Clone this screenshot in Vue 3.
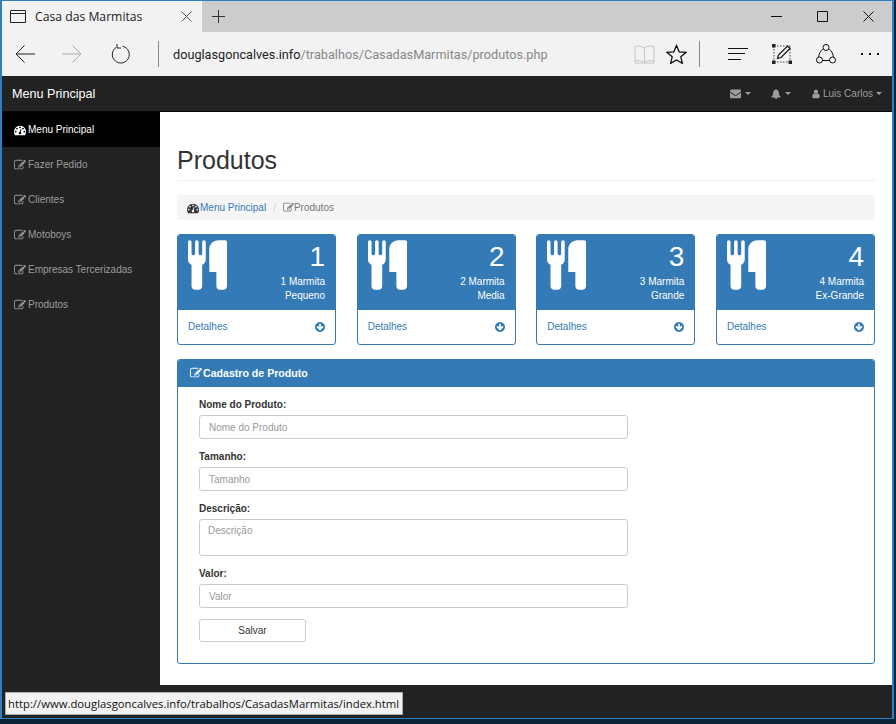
<script setup>
const sideItems = ['Fazer Pedido', 'Clientes', 'Motoboys', 'Empresas Tercerizadas', 'Produtos']
const cards = [
  { n: 1, line: '1 Marmita', size: 'Pequeno' },
  { n: 2, line: '2 Marmita', size: 'Media' },
  { n: 3, line: '3 Marmita', size: 'Grande' },
  { n: 4, line: '4 Marmita', size: 'Ex-Grande' }
]
const editPath = 'M888 1184l116-116-152-152-116 116v56h96v96h56zm440-720q-16-16-33 1l-350 350q-17 17-1 33t33-1l350-350q17-17 1-33zm80 594v190q0 119-84.5 203.5t-203.5 84.5h-832q-119 0-203.5-84.5t-84.5-203.5v-832q0-119 84.5-203.5t203.5-84.5h832q63 0 117 25 15 7 18 23 3 17-9 29l-49 49q-14 14-32 8-23-6-45-6h-832q-66 0-113 47t-47 113v832q0 66 47 113t113 47h832q66 0 113-47t47-113v-126q0-13 9-22l64-64q15-15 35-7t20 29zm-96-738l288 288-672 672h-288v-288zm444 132l-92 92-288-288 92-92q28-28 68-28t68 28l152 152q28 28 28 68t-28 68z'
const gaugePath = 'M384 1152q0-53-37.5-90.5t-90.5-37.5-90.5 37.5-37.5 90.5 37.5 90.5 90.5 37.5 90.5-37.5 37.5-90.5zm192-448q0-53-37.5-90.5t-90.5-37.5-90.5 37.5-37.5 90.5 37.5 90.5 90.5 37.5 90.5-37.5 37.5-90.5zm428 481l101-382q6-26-7.5-48.5t-38.5-29.5-48 6.5-30 39.5l-101 382q-60 5-107 43.5t-63 98.5q-20 77 20 146t117 89 146-20 89-117q16-60-6-117t-72-91zm660-33q0-53-37.5-90.5t-90.5-37.5-90.5 37.5-37.5 90.5 37.5 90.5 90.5 37.5 90.5-37.5 37.5-90.5zm-640-640q0-53-37.5-90.5t-90.5-37.5-90.5 37.5-37.5 90.5 37.5 90.5 90.5 37.5 90.5-37.5 37.5-90.5zm448 192q0-53-37.5-90.5t-90.5-37.5-90.5 37.5-37.5 90.5 37.5 90.5 90.5 37.5 90.5-37.5 37.5-90.5zm320 448q0 261-141 483-19 29-54 29h-1402q-35 0-54-29-141-221-141-483 0-182 71-348t191-286 286-191 348-71 348 71 286 191 191 286 71 348z'
const envelopePath = 'M1792 710v794q0 66-47 113t-113 47h-1472q-66 0-113-47t-47-113v-794q44 49 101 87 362 246 497 345 57 42 92.5 65.5t94.5 48 110 24.5h2q51 0 110-24.5t94.5-48 92.5-65.5q170-123 498-345 57-39 100-87zm0-294q0 79-49 151t-122 123q-376 261-468 325-10 7-42.5 30.5t-54 38-52 32.5-57.5 27-50 9h-2q-23 0-50-9t-57.5-27-52-32.5-54-38-42.5-30.5q-91-64-262-182.5t-205-142.5q-62-42-117-115.5t-55-136.5q0-78 41.5-130t118.5-52h1472q65 0 112.5 47t47.5 113z'
const bellPath = 'M912 1696q0-16-16-16-59 0-101.5-42.5t-42.5-101.5q0-16-16-16t-16 16q0 73 51.5 124.5t124.5 51.5q16 0 16-16zm816-288q0 52-38 90t-90 38h-448q0 106-75 181t-181 75-181-75-75-181h-448q-52 0-90-38t-38-90q50-42 91-88t85-119.5 74.5-158.5 50-206 19.5-260q0-152 117-282.5t307-158.5q-8-19-8-39 0-40 28-68t68-28 68 28 28 68q0 20-8 39 190 28 307 158.5t117 282.5q0 139 19.5 260t50 206 74.5 158.5 85 119.5 91 88z'
const userPath = 'M1536 1399q0 109-62.5 187t-150.5 78h-854q-88 0-150.5-78t-62.5-187q0-85 8.5-160.5t31.5-152 58.5-131 94-89 134.5-34.5q131 128 313 128t313-128q76 0 134.5 34.5t94 89 58.5 131 31.5 152 8.5 160.5zm-256-887q0 159-112.5 271.5t-271.5 112.5-271.5-112.5-112.5-271.5 112.5-271.5 271.5-112.5 271.5 112.5 112.5 271.5z'
const cutleryPath = 'M640 64v640q0 61-35.5 111t-92.5 70v779q0 52-38 90t-90 38h-128q-52 0-90-38t-38-90v-779q-57-20-92.5-70t-35.5-111v-640q0-26 19-45t45-19 45 19 19 45v416q0 26 19 45t45 19 45-19 19-45v-416q0-26 19-45t45-19 45 19 19 45v416q0 26 19 45t45 19 45-19 19-45v-416q0-26 19-45t45-19 45 19 19 45zm768 0v1600q0 52-38 90t-90 38h-128q-52 0-90-38t-38-90v-512h-224q-13 0-22.5-9.5t-9.5-22.5v-800q0-132 94-226t226-94h256q26 0 45 19t19 45z'
const arrowDownPath = 'M1412 897q0-27-18-45l-91-91q-18-18-45-18t-45 18l-189 189v-502q0-26-19-45t-45-19h-128q-26 0-45 19t-19 45v502l-189-189q-19-19-45-19t-45 19l-91 91q-18 18-18 45t18 45l362 362 91 91q18 18 45 18t45-18l91-91 362-362q18-18 18-45zm252-1q0 209-103 385.5t-279.5 279.5-385.5 103-385.5-103-279.5-279.5-103-385.5 103-385.5 279.5-279.5 385.5-103 385.5 103 279.5 279.5 103 385.5z'
</script>

<template>
  <div class="screen">
    <div class="window">
      <div class="tabstrip">
        <div class="tab">
          <svg class="tab-icon" width="17" height="14" viewBox="0 0 17 14" fill="none" stroke="#222"><path d="M.5.5h15v12H.5zM.5 3.5h15" /></svg>
          <span class="tab-title">Casa das Marmitas</span>
          <svg width="11" height="11" viewBox="0 0 11 11" stroke="#555" fill="none"><path d="M.5.5l10 10M10.5.5l-10 10" /></svg>
        </div>
        <svg class="tab-new" width="13" height="13" viewBox="0 0 13 13" stroke="#333" fill="none"><path d="M6.5 0v13M0 6.5h13" /></svg>
        <div class="win-controls">
          <svg width="11" height="11" viewBox="0 0 11 11" stroke="#111" fill="none"><path d="M0 5.5h11" /></svg>
          <svg width="11" height="11" viewBox="0 0 11 11" stroke="#111" fill="none"><path d="M.5.5h10v10H.5z" /></svg>
          <svg width="11" height="11" viewBox="0 0 11 11" stroke="#111" fill="none"><path d="M.5.5l10 10M10.5.5l-10 10" /></svg>
        </div>
      </div>

      <div class="toolbar">
        <svg class="t-back" width="20" height="18" viewBox="0 0 20 18" stroke="#222" fill="none"><path d="M20 9H1M9.5.5L1 9l8.5 8.5" /></svg>
        <svg class="t-forward" width="20" height="18" viewBox="0 0 20 18" stroke="#aaa" fill="none"><path d="M0 9h19M10.5.5L19 9l-8.5 8.5" /></svg>
        <svg class="t-refresh" width="19" height="20" viewBox="0 0 19 20" stroke="#222" fill="none"><path d="M5 3.5a8.5 8.5 0 1 0 6.5-1.3M6 0v4h4" /></svg>
        <span class="t-sep"></span>
        <span class="url">douglasgoncalves.info<span class="url-path">/trabalhos/CasadasMarmitas/produtos.php</span></span>
        <svg width="21" height="19" viewBox="0 0 21 19" stroke="#c4c4c4" fill="none"><path d="M10.5 3C8 1 4 .8 1 1.5V16c3-.7 7-.5 9.5 1.5C13 15.5 17 15.3 20 16V1.5C17 .8 13 1 10.5 3zM10.5 3v14.5M1 16v2h19v-2" /></svg>
        <svg class="t-star" width="21" height="20" viewBox="0 0 21 20" stroke="#111" stroke-width="1.3" fill="none"><path d="M10.5 1.5l2.7 6.300 6.800.6-5.200 4.400 1.600 6.600-5.900-3.500-5.900 3.500 1.600-6.600L1 8.400l6.800-.6z" /></svg>
        <span class="t-sep t-sep2"></span>
        <svg class="t-hub" width="20" height="12" viewBox="0 0 20 12" stroke="#111" fill="none"><path d="M0 .5h20M0 5.5h17M0 11.500h13" /></svg>
        <svg class="t-note" width="20" height="20" viewBox="0 0 20 20" fill="none"><path d="M2 2h16M2 18h16M2 2v16M18 2v16" stroke="#444" stroke-dasharray="1.5 1.5" /><path d="M5.500 14.500l1-3.500L15.500 2l2.500 2.500-9 9z" stroke="#111" stroke-width="1.2" fill="#f2f2f2" /><path d="M0 0h3.500v3.500H0zM16.500 16.500H20V20h-3.500zM0 16.500h3.500V20H0z" fill="#222" /></svg>
        <svg class="t-share" width="20" height="20" viewBox="0 0 20 20" stroke="#111" fill="none"><path d="M7 4.800C4.500 7 2.800 10 2.600 13M13 4.800c2.500 2.200 4.200 5.200 4.400 8.200M6.500 16.500h7" /><circle cx="10" cy="3.5" r="3" /><circle cx="3.5" cy="16" r="3" /><circle cx="16.5" cy="16" r="3" /></svg>
        <span class="t-more"><i></i><i></i><i></i></span>
      </div>

      <div class="navbar">
        <span class="brand">Menu Principal</span>
        <div class="nav-right">
          <span class="nav-item">
            <svg width="11" height="11" viewBox="0 0 1792 1792" fill="#9d9d9d"><path :d="envelopePath" /></svg>
            <i class="caret"></i>
          </span>
          <span class="nav-item">
            <svg width="10" height="10" viewBox="0 0 1792 1792" fill="#9d9d9d"><path :d="bellPath" /></svg>
            <i class="caret"></i>
          </span>
          <span class="nav-item nav-user">
            <svg width="9" height="10" viewBox="200 100 1400 1600" fill="#9d9d9d"><path :d="userPath" /></svg>
            Luis Carlos
            <i class="caret"></i>
          </span>
        </div>
      </div>

      <div class="middle">
        <nav class="sidebar">
          <a class="side-link active">
            <svg width="12" height="12" viewBox="0 0 1792 1792" fill="#fff"><path :d="gaugePath" /></svg>
            Menu Principal
          </a>
          <a v-for="item in sideItems" :key="item" class="side-link">
            <svg width="12" height="12" viewBox="0 0 1792 1792" fill="#9d9d9d"><path :d="editPath" /></svg>
            {{ item }}
          </a>
        </nav>

        <main class="content">
          <h1 class="page-title">Produtos</h1>
          <div class="breadcrumb">
            <svg width="12" height="12" viewBox="0 0 1792 1792" fill="#333"><path :d="gaugePath" /></svg>
            <a class="crumb-link">Menu Principal</a>
            <span class="crumb-sep">/</span>
            <svg width="11" height="11" viewBox="0 0 1792 1792" fill="#777"><path :d="editPath" /></svg>
            <span class="crumb-current">Produtos</span>
          </div>

          <div class="cards">
            <div v-for="c in cards" :key="c.n" class="card">
              <div class="card-head">
                <svg width="39" height="50" viewBox="0 0 1408 1792" fill="#fff"><path :d="cutleryPath" /></svg>
                <div class="card-text">
                  <div class="card-num">{{ c.n }}</div>
                  <div>{{ c.line }}</div>
                  <div>{{ c.size }}</div>
                </div>
              </div>
              <div class="card-foot">
                <span>Detalhes</span>
                <svg width="10" height="10" viewBox="128 128 1536 1536" fill="#337ab7"><path :d="arrowDownPath" /></svg>
              </div>
            </div>
          </div>

          <section class="panel">
            <div class="panel-head">
              <svg width="12" height="12" viewBox="0 0 1792 1792" fill="#fff"><path :d="editPath" /></svg>
              Cadastro de Produto
            </div>
            <form class="panel-body" @submit.prevent>
              <label class="field">
                <span>Nome do Produto:</span>
                <input placeholder="Nome do Produto" />
              </label>
              <label class="field">
                <span>Tamanho:</span>
                <input placeholder="Tamanho" />
              </label>
              <label class="field">
                <span>Descrição:</span>
                <textarea placeholder="Descrição"></textarea>
              </label>
              <label class="field">
                <span>Valor:</span>
                <input placeholder="Valor" />
              </label>
              <button class="save" type="button">Salvar</button>
            </form>
          </section>
        </main>
      </div>

      <div class="statusbar">
        <div class="status-tip">http://www.douglasgoncalves.info/trabalhos/CasadasMarmitas/index.html</div>
      </div>
    </div>
  </div>
</template>

<style>
html, body { margin: 0; background: #0d2338; overflow: hidden; }
</style>

<style scoped>
.screen {
  width: 896px;
  height: 724px;
  overflow: hidden;
  font-family: "Liberation Sans", Arial, sans-serif;
  font-size: 10px;
  color: #333;
}
.window {
  width: 890px;
  height: 717px;
  border: 2px solid #2f7fc0;
  border-width: 1px 2px 1px 2px;
  display: flex;
  flex-direction: column;
  background: #222;
}
.tabstrip {
  height: 31px;
  background: #cccccc;
  display: flex;
  align-items: center;
  flex-shrink: 0;
}
.tab {
  width: 200px;
  height: 31px;
  background: #f2f2f2;
  display: flex;
  align-items: center;
  flex-shrink: 0;
}
.tab-icon { margin-left: 8px; }
.tab-title {
  margin-left: 8px;
  font-family: "Open Sans", sans-serif;
  font-size: 12.2px;
  color: #222;
  width: 146px;
}
.tab-new { margin-left: 10px; }
.win-controls {
  margin-left: auto;
  display: flex;
  gap: 35px;
  padding-right: 18px;
}
.toolbar {
  height: 44px;
  background: #f2f2f2;
  display: flex;
  align-items: center;
  flex-shrink: 0;
}
.t-back { margin-left: 13px; }
.t-forward { margin-left: 27px; }
.t-refresh { margin-left: 29px; }
.t-sep {
  width: 1px;
  height: 26px;
  background: #888;
  margin-left: 28px;
}
.url {
  margin-left: 14px;
  width: 461px;
  font-family: Roboto, sans-serif;
  font-size: 12.7px;
  color: #222;
  white-space: nowrap;
}
.url-path { color: #888; }
.t-star { margin-left: 11px; }
.t-sep2 { margin-left: 12px; }
.t-hub { margin-left: 28px; }
.t-note { margin-left: 24px; }
.t-share { margin-left: 24px; }
.t-more {
  margin-left: 25px;
  display: flex;
  gap: 6px;
}
.t-more i {
  width: 2px;
  height: 2px;
  background: #111;
}
.navbar {
  height: 36px;
  background: #222;
  border-bottom: 1px solid #080808;
  box-sizing: border-box;
  display: flex;
  align-items: center;
  justify-content: space-between;
  flex-shrink: 0;
  padding: 0 10px;
}
.brand {
  font-size: 12.6px;
  color: #fff;
}
.nav-right {
  display: flex;
  align-items: center;
  color: #9d9d9d;
}
.nav-item {
  display: flex;
  align-items: center;
  gap: 4px;
  margin-left: 20px;
}
.nav-user {
  gap: 3px;
  margin-left: 21px;
}
.nav-user svg { width: 8px; }
.caret {
  width: 0;
  height: 0;
  border-left: 3px solid transparent;
  border-right: 3px solid transparent;
  border-top: 3px solid #9d9d9d;
}
.middle {
  flex: 1;
  display: flex;
  min-height: 0;
}
.sidebar {
  width: 158px;
  background: #222;
  flex-shrink: 0;
}
.side-link {
  height: 35px;
  display: flex;
  align-items: center;
  gap: 2px;
  padding-left: 12px;
  color: #9d9d9d;
}
.side-link.active {
  background: #000;
  color: #fff;
}
.content {
  flex: 1;
  background: #fff;
  padding: 0 17px;
}
.page-title {
  margin: 0 0 14px;
  padding: 35px 0 6px;
  height: 69px;
  box-sizing: border-box;
  border-bottom: 1px solid #eee;
  font-size: 25px;
  line-height: 27px;
  font-weight: 500;
}
.breadcrumb {
  height: 25px;
  background: #f5f5f5;
  border-radius: 3px;
  display: flex;
  align-items: center;
  padding: 0 10px;
  gap: 1px;
}
.crumb-link { color: #337ab7; }
.crumb-sep {
  color: #ccc;
  margin: 0 6px;
}
.crumb-current {
  color: #777;
  margin-left: -1px;
}
.cards {
  margin-top: 14px;
  display: flex;
  justify-content: space-between;
}
.card {
  width: 159px;
  height: 111px;
  box-sizing: border-box;
  border: 1px solid #337ab7;
  border-radius: 3px;
  overflow: hidden;
}
.card-head {
  height: 75px;
  background: #337ab7;
  color: #fff;
  display: flex;
  justify-content: space-between;
  padding: 5px 10px 0 10px;
  box-sizing: border-box;
}
.card-text {
  text-align: right;
  line-height: 14px;
}
.card-num {
  font-size: 28px;
  line-height: 30px;
  margin-top: 2px;
  margin-bottom: 3px;
}
.card-foot {
  height: 33px;
  display: flex;
  align-items: center;
  justify-content: space-between;
  padding: 0 10px;
  color: #337ab7;
}
.panel {
  margin-top: 14px;
  height: 305px;
  box-sizing: border-box;
  border: 1px solid #337ab7;
  border-radius: 3px;
  overflow: hidden;
}
.panel-head {
  height: 27px;
  box-sizing: border-box;
  background: #337ab7;
  color: #fff;
  font-size: 10.6px;
  font-weight: bold;
  display: flex;
  align-items: center;
  gap: 1px;
  padding: 0 12px 1px;
}
.panel-body {
  padding: 11px 21px;
}
.field {
  display: block;
  margin-bottom: 11px;
}
.field span {
  display: block;
  font-weight: bold;
  margin-bottom: 4px;
  line-height: 13px;
}
.field input,
.field textarea {
  display: block;
  width: 429px;
  height: 24px;
  box-sizing: border-box;
  border: 1px solid #ccc;
  border-radius: 3px;
  padding: 0 9px;
  font-family: inherit;
  font-size: 10px;
  resize: none;
  outline: none;
}
.field textarea {
  height: 37px;
  padding: 5px 8px 0;
}
.field input::placeholder,
.field textarea::placeholder { color: #999; }
.save {
  display: block;
  width: 107px;
  height: 23px;
  background: #fff;
  border: 1px solid #ccc;
  border-radius: 3px;
  font-family: inherit;
  font-size: 10px;
  color: #333;
}
.statusbar {
  height: 33px;
  flex-shrink: 0;
  background: #222;
  padding-top: 7px;
  padding-left: 3px;
  box-sizing: border-box;
}
.status-tip {
  display: inline-block;
  height: 23px;
  line-height: 22px;
  padding: 0 3px 0 2px;
  background: #f2f2f2;
  border: 1px solid #aaa;
  box-sizing: border-box;
  font-family: "Open Sans", sans-serif;
  font-size: 11.3px;
  color: #111;
  white-space: nowrap;
}
</style>
